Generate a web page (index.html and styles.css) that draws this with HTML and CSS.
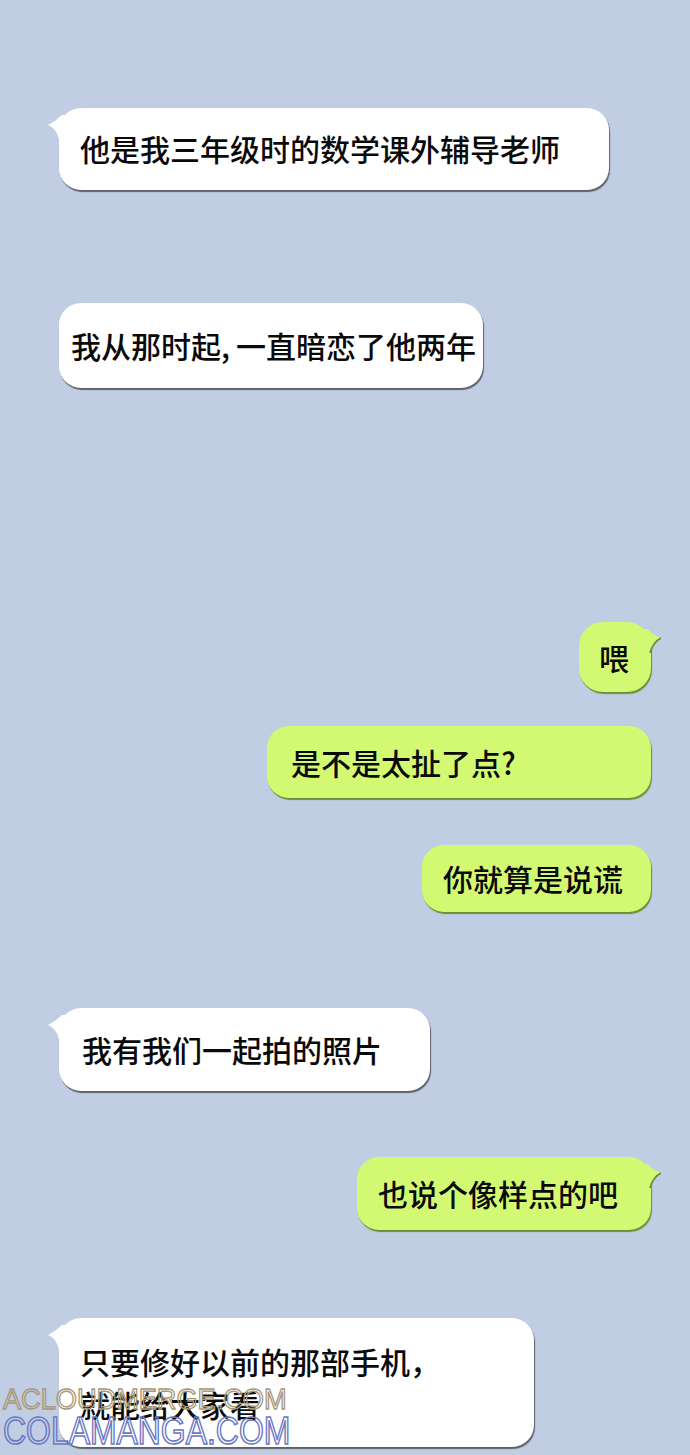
FILE: index.html
```html
<!DOCTYPE html>
<html lang="zh">
<head>
<meta charset="utf-8">
<title>Chat</title>
<link rel="stylesheet" href="styles.css">
</head>
<body>
<main class="chat">
  <div class="row them r1">
    <div class="bubble white b1">
      <svg class="tail tail-l" viewBox="0 0 24 26"><path d="M24,2 L14,2 Q8,8 0,12 Q8,15 11,26 L24,26 Z"/></svg>
      他是我三年级时的数学课外辅导老师
    </div>
  </div>
  <div class="row them r2">
    <div class="bubble white b2">我从那时起,&thinsp;一直暗恋了他两年</div>
  </div>
  <div class="row me r3">
    <div class="bubble green b3">
      <svg class="tail tail-r" viewBox="0 0 24 26"><path d="M0,2 L10,2 Q16,8 24,11 Q16,15 13,26 L0,26 Z"/><path class="edge" d="M24,11 Q16,15 13,26"/></svg>
      喂
    </div>
  </div>
  <div class="row me r4">
    <div class="bubble green b4">是不是太扯了点?</div>
  </div>
  <div class="row me r5">
    <div class="bubble green b5">你就算是说谎</div>
  </div>
  <div class="row them r6">
    <div class="bubble white b6">
      <svg class="tail tail-l" viewBox="0 0 24 26"><path d="M24,2 L14,2 Q8,8 0,12 Q8,15 11,26 L24,26 Z"/></svg>
      我有我们一起拍的照片
    </div>
  </div>
  <div class="row me r7">
    <div class="bubble green b7">
      <svg class="tail tail-r" viewBox="0 0 24 26"><path d="M0,2 L10,2 Q16,8 24,11 Q16,15 13,26 L0,26 Z"/><path class="edge" d="M24,11 Q16,15 13,26"/></svg>
      也说个像样点的吧
    </div>
  </div>
  <div class="row them r8">
    <div class="bubble white b8">
      <svg class="tail tail-l" viewBox="0 0 24 26"><path d="M24,2 L14,2 Q8,8 0,12 Q8,15 11,26 L24,26 Z"/></svg>
      只要修好以前的那部手机，<br>就能给大家看
    </div>
  </div>
</main>
<div class="watermark">
  <div class="wm1">ACLOUDMERGE.COM</div>
  <div class="wm2">COLAMANGA.COM</div>
</div>
</body>
</html>
```
FILE: styles.css
```css
html, body {
  margin: 0;
  padding: 0;
}
body {
  background: #c1cde3;
  width: 690px;
  height: 1455px;
  overflow: hidden;
  position: relative;
  font-family: "Noto Sans CJK SC", "Noto Sans", sans-serif;
}
.chat {
  display: flex;
  flex-direction: column;
  padding: 108px 39px 0 59px;
}
.row {
  display: flex;
}
.row.me {
  justify-content: flex-end;
}
.r2 { margin-top: 113px; }
.r3 { margin-top: 234px; }
.r4 { margin-top: 34px; }
.r5 { margin-top: 47px; }
.r6 { margin-top: 96px; }
.r7 { margin-top: 66px; }
.r8 { margin-top: 88px; }

.bubble {
  position: relative;
  box-sizing: border-box;
  font-size: 30px;
  font-weight: 500;
  line-height: 43px;
  color: #0a0a0a;
  border-radius: 22px;
  white-space: nowrap;
}
.white {
  background: #ffffff;
  box-shadow: 1px 2px 1px rgba(60, 60, 70, 0.75);
}
.green {
  background: #d3f973;
  box-shadow: 1px 2px 1px #6f8c38;
}
.tail {
  position: absolute;
  top: 5px;
  width: 24px;
  height: 26px;
}
.tail-l {
  left: -11px;
  fill: #ffffff;
}
.tail-r {
  right: -10px;
  fill: #d3f973;
}
.tail-r .edge {
  fill: none;
  stroke: #6f8c38;
  stroke-width: 1.6;
}

.b1 { width: 550px; height: 82px; padding: 19px 0 0 21px; }
.b2 { width: 424px; height: 85px; padding: 21px 0 0 12px; }
.b3 { width: 72px; height: 70px; padding: 14px 0 0 20px; border-radius: 24px; }
.b4 { width: 384px; height: 72px; padding: 15px 0 0 24px; }
.b5 { width: 229px; height: 67px; padding: 12px 0 0 21px; }
.b6 { width: 371px; height: 83px; padding: 20px 0 0 23px; }
.b7 { width: 294px; height: 73px; padding: 15px 0 0 21px; }
.b8 { width: 475px; height: 129px; padding: 22px 0 0 21px; }

.watermark {
  position: absolute;
  left: 3px;
  top: 1384px;
  font-family: "Liberation Sans", Arial, sans-serif;
  color: transparent;
  line-height: 1;
  white-space: nowrap;
  pointer-events: none;
}
.wm1 {
  font-size: 30px;
  transform: scaleX(0.905);
  transform-origin: left center;
  -webkit-text-stroke: 1.4px #a89878;
}
.wm2 {
  margin-top: -2px;
  font-size: 38px;
  transform: scaleX(0.84);
  transform-origin: left center;
  -webkit-text-stroke: 1.6px #6a78c4;
}
```
